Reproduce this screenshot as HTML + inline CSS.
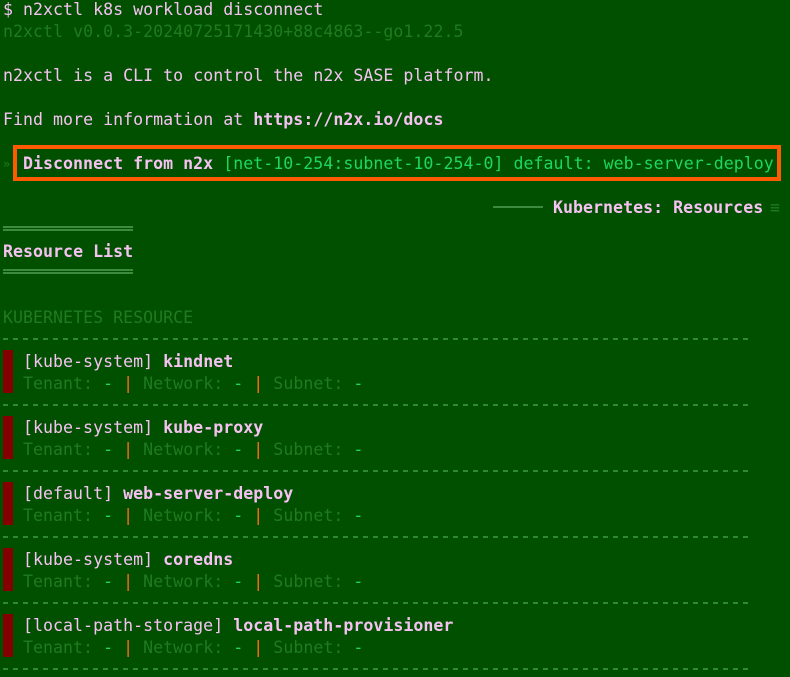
<!DOCTYPE html>
<html><head><meta charset="utf-8"><style>
html,body{margin:0;padding:0}
body{width:790px;height:677px;background:#005000;overflow:hidden;position:relative;font-family:"DejaVu Sans Mono","Liberation Mono",monospace;font-size:16.6px;color:#f6c2f2}
.l{position:absolute;left:3px;white-space:pre;line-height:22px;height:22px;letter-spacing:0.02px}
.d{color:#1f7a22}
.g{color:#1ed760}
.b{font-weight:bold}
.o{color:#ff6a1a}
.dash{position:absolute;left:3px;width:750px;height:2px;background:repeating-linear-gradient(90deg,#2f8a34 0 5px,transparent 5px 10px)}
.bar{position:absolute;left:3px;width:10px;height:43px;background:#850000}
.dbl{position:absolute;left:3px;width:130px;height:5px;border-top:2px solid #3b8a3e;border-bottom:2px solid #3b8a3e;box-sizing:border-box}
</style></head><body>
<div class="l" style="top:-1px">$ n2xctl k8s workload disconnect</div>
<div class="l d" style="top:21px">n2xctl v0.0.3-20240725171430+88c4863--go1.22.5</div>
<div class="l" style="top:65px">n2xctl is a CLI to control the n2x SASE platform.</div>
<div class="l" style="top:109px">Find more information at <span class="b">https://n2x.io/docs</span></div>
<div class="l d" style="top:153px;font-size:12px">»</div>
<div style="position:absolute;left:13px;top:145px;width:768px;height:36px;border:4px solid #ff5a00;box-sizing:border-box"></div>
<div class="l" style="top:153px;left:23px"><span class="b">Disconnect from n2x</span> <span class="g">[net-10-254:subnet-10-254-0] default: web-server-deploy</span></div>
<div style="position:absolute;left:493px;top:206px;width:50px;height:2px;background:#3b8a3e"></div>
<div class="l b" style="top:197px;left:553px">Kubernetes: Resources</div>
<div class="l d" style="top:197px;left:770px">≡</div>
<div class="dbl" style="top:226px"></div>
<div class="l b" style="top:241px">Resource List</div>
<div class="dbl" style="top:269px"></div>
<div class="l d" style="top:307px">KUBERNETES RESOURCE</div>
<div class="dash" style="top:338px"></div>

<div class="bar" style="top:350px"></div>
<div class="l" style="top:351px;left:23px">[kube-system] <span class="b">kindnet</span></div>
<div class="l d" style="top:373px;left:23px">Tenant: <span class="g">-</span> <span class="o">|</span> Network: <span class="g">-</span> <span class="o">|</span> Subnet: <span class="g">-</span></div>
<div class="dash" style="top:404px"></div>

<div class="bar" style="top:416px"></div>
<div class="l" style="top:417px;left:23px">[kube-system] <span class="b">kube-proxy</span></div>
<div class="l d" style="top:439px;left:23px">Tenant: <span class="g">-</span> <span class="o">|</span> Network: <span class="g">-</span> <span class="o">|</span> Subnet: <span class="g">-</span></div>
<div class="dash" style="top:470px"></div>

<div class="bar" style="top:482px"></div>
<div class="l" style="top:483px;left:23px">[default] <span class="b">web-server-deploy</span></div>
<div class="l d" style="top:505px;left:23px">Tenant: <span class="g">-</span> <span class="o">|</span> Network: <span class="g">-</span> <span class="o">|</span> Subnet: <span class="g">-</span></div>
<div class="dash" style="top:536px"></div>

<div class="bar" style="top:548px"></div>
<div class="l" style="top:549px;left:23px">[kube-system] <span class="b">coredns</span></div>
<div class="l d" style="top:571px;left:23px">Tenant: <span class="g">-</span> <span class="o">|</span> Network: <span class="g">-</span> <span class="o">|</span> Subnet: <span class="g">-</span></div>
<div class="dash" style="top:602px"></div>

<div class="bar" style="top:614px"></div>
<div class="l" style="top:615px;left:23px">[local-path-storage] <span class="b">local-path-provisioner</span></div>
<div class="l d" style="top:637px;left:23px">Tenant: <span class="g">-</span> <span class="o">|</span> Network: <span class="g">-</span> <span class="o">|</span> Subnet: <span class="g">-</span></div>
<div class="dash" style="top:668px"></div>
</body></html>
